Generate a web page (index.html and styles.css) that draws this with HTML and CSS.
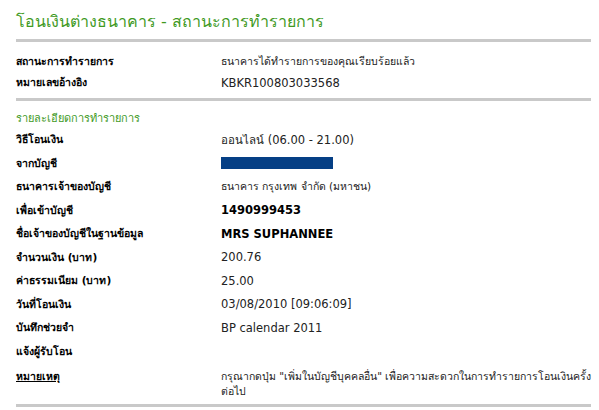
FILE: index.html
```html
<!DOCTYPE html>
<html lang="th">
<head>
    <meta charset="UTF-8">
    <title>โอนเงินต่างธนาคาร - สถานะการทำรายการ</title>
    <link rel="stylesheet" href="styles.css">
</head>
<body>

<div class="page">
    <h1 class="title">โอนเงินต่างธนาคาร - สถานะการทำรายการ</h1>
    <div class="rule"></div>

    <!-- สถานะ -->
    <div class="status">
        <div class="row short">
            <div class="label">สถานะการทำรายการ</div>
            <div class="value thai">ธนาคารได้ทำรายการของคุณเรียบร้อยแล้ว</div>
        </div>
        <div class="row short">
            <div class="label">หมายเลขอ้างอิง</div>
            <div class="value">KBKR100803033568</div>
        </div>
    </div>
    <div class="rule"></div>

    <!-- รายละเอียด -->
    <div class="section">รายละเอียดการทำรายการ</div>
    <div class="row">
        <div class="label">วิธีโอนเงิน</div>
        <div class="value">ออนไลน์ (06.00 - 21.00)</div>
    </div>
    <div class="row">
        <div class="label">จากบัญชี</div>
        <div class="value"><span class="masked"></span></div>
    </div>
    <div class="row">
        <div class="label">ธนาคารเจ้าของบัญชี</div>
        <div class="value thai">ธนาคาร กรุงเทพ จำกัด (มหาชน)</div>
    </div>
    <div class="row">
        <div class="label">เพื่อเข้าบัญชี</div>
        <div class="value strong">1490999453</div>
    </div>
    <div class="row">
        <div class="label">ชื่อเจ้าของบัญชีในฐานข้อมูล</div>
        <div class="value strong">MRS SUPHANNEE</div>
    </div>
    <div class="row">
        <div class="label">จำนวนเงิน (บาท)</div>
        <div class="value">200.76</div>
    </div>
    <div class="row">
        <div class="label">ค่าธรรมเนียม (บาท)</div>
        <div class="value">25.00</div>
    </div>
    <div class="row">
        <div class="label">วันที่โอนเงิน</div>
        <div class="value">03/08/2010 [09:06:09]</div>
    </div>
    <div class="row">
        <div class="label">บันทึกช่วยจำ</div>
        <div class="value">BP calendar 2011</div>
    </div>
    <div class="row">
        <div class="label">แจ้งผู้รับโอน</div>
        <div class="value"></div>
    </div>
    <div class="row note">
        <div class="label"><u>หมายเหตุ</u></div>
        <div class="value thai">กรุณากดปุ่ม "เพิ่มในบัญชีบุคคลอื่น" เพื่อความสะดวกในการทำรายการโอนเงินครั้งต่อไป</div>
    </div>
    <div class="rule"></div>
</div>

</body>
</html>
```

FILE: styles.css
```css
body {
    margin: 0;
    padding: 0;
    background-color: #ffffff;
    font-family: Tahoma, "DejaVu Sans", Verdana, sans-serif;
    color: #222222;
}

.page {
    width: 575px;
    padding: 10px 0 0 16px;
}

.title {
    margin: 0;
    font-size: 16px;
    font-weight: normal;
    line-height: 24px;
    color: #3f9a1f;
}

.rule {
    height: 3px;
    background-color: #c9c9c9;
}

.page > .rule:first-of-type {
    margin-top: 5px;
}

.status {
    padding: 9px 0 5px 0;
}

.row {
    display: flex;
    height: 23.5px;
    align-items: center;
    font-size: 11.5px;
}

.row.short {
    height: 21px;
}

.label {
    width: 205px;
    flex-shrink: 0;
    font-size: 10.5px;
    font-weight: bold;
    color: #000000;
}

.value {
    flex: 1;
}

.value.thai {
    font-size: 10.5px;
}

.value.strong {
    font-weight: bold;
    color: #000000;
}

.masked {
    display: inline-block;
    width: 112px;
    height: 12px;
    margin-top: 2px;
    background-color: #053f85;
}

.section {
    margin-top: 9px;
    font-size: 11px;
    line-height: 18px;
    color: #3f9a1f;
}

.row.note {
    height: auto;
    align-items: flex-start;
    padding: 6px 0 5px 0;
    line-height: 15px;
}

.row.note .value {
    margin-right: -8px;
}
```
